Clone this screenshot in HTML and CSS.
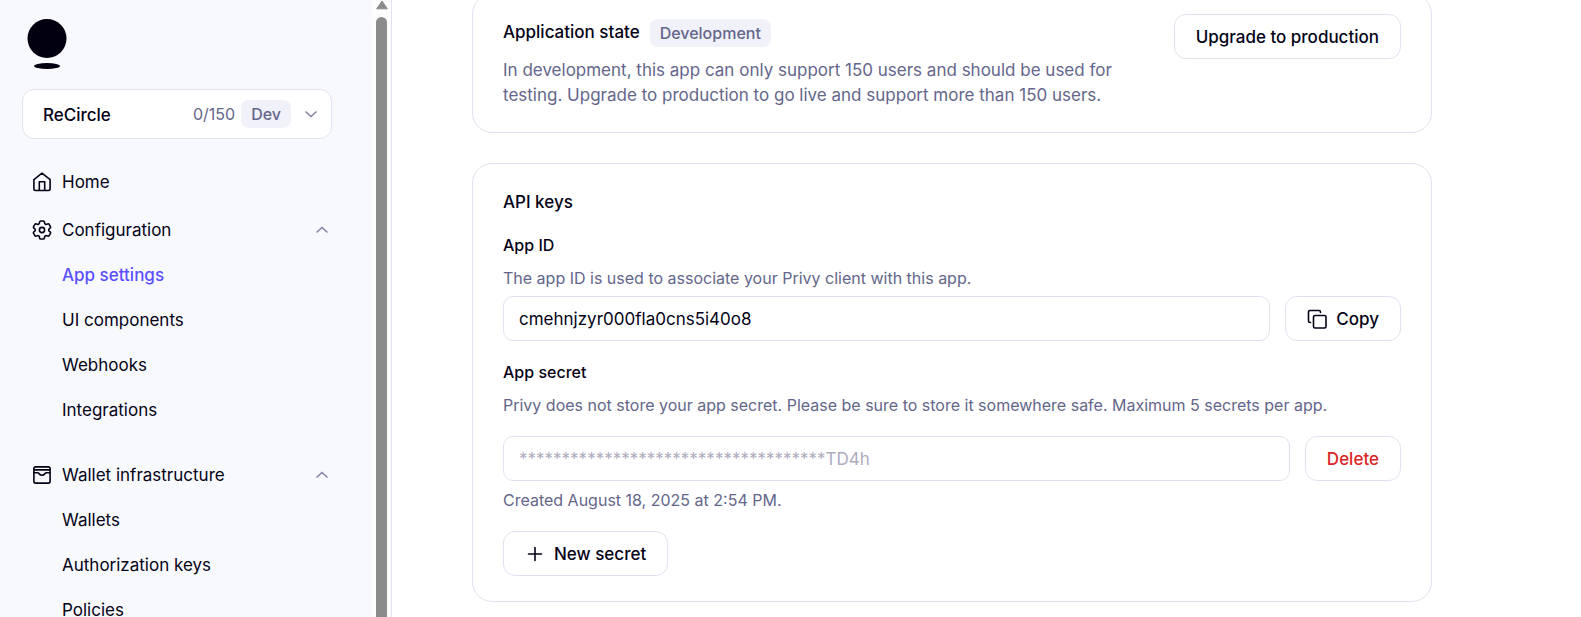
FILE: index.html
```html
<!DOCTYPE html>
<html lang="en">
<head>
<meta charset="utf-8">
<meta name="viewport" content="width=device-width, initial-scale=1">
<title>App settings</title>
<link rel="stylesheet" href="styles.css">
</head>
<body>
<div class="app">
  <aside class="sidebar">
    <div class="sidebar-body">
      <svg class="logo" viewBox="0 0 40 52" role="img" aria-label="Privy">
        <circle cx="20" cy="19.500" r="19.500"/>
        <ellipse cx="20" cy="47" rx="13" ry="3"/>
      </svg>
      <button class="switcher" type="button">
        <span class="switcher-name">ReCircle</span>
        <span class="switcher-count">0/150</span>
        <span class="badge">Dev</span>
        <svg class="chevron" viewBox="0 0 14 14" aria-hidden="true"><path d="M1.500 4.500 7 9.500l5.500-5"/></svg>
      </button>
      <nav class="nav">
        <a class="nav-top" href="#">
          <svg class="icon" viewBox="0 0 20 20" aria-hidden="true"><path d="M1.900 7.600 10 1.200l8.100 6.400v9.200a1.700 1.700 0 0 1-1.700 1.700H3.600a1.700 1.700 0 0 1-1.700-1.700zM7.300 18.300V9.700h5.400v8.600"/></svg>
          <span>Home</span>
        </a>
        <section class="group">
          <button class="nav-top" type="button">
            <svg class="icon" viewBox="2 2 20 20" aria-hidden="true"><path d="M9.594 3.940c.090-.542.560-.940 1.110-.940h2.593c.550 0 1.020.398 1.110.940l.213 1.281c.063.374.313.686.645.870.074.040.147.083.220.127.325.196.720.257 1.075.124l1.217-.456a1.125 1.125 0 0 1 1.370.490l1.296 2.247a1.125 1.125 0 0 1-.260 1.431l-1.003.827c-.293.241-.438.613-.430.992a7.723 7.723 0 0 1 0 .255c-.008.378.137.750.430.991l1.004.827c.424.350.534.955.260 1.430l-1.298 2.247a1.125 1.125 0 0 1-1.369.491l-1.217-.456c-.355-.133-.750-.072-1.076.124a6.470 6.470 0 0 1-.220.128c-.331.183-.581.495-.644.869l-.213 1.281c-.090.543-.560.940-1.110.940h-2.594c-.550 0-1.019-.398-1.110-.940l-.213-1.281c-.062-.374-.312-.686-.644-.870a6.520 6.520 0 0 1-.220-.127c-.325-.196-.720-.257-1.076-.124l-1.217.456a1.125 1.125 0 0 1-1.369-.490l-1.297-2.247a1.125 1.125 0 0 1 .260-1.431l1.004-.827c.292-.240.437-.613.430-.991a6.932 6.932 0 0 1 0-.255c.007-.380-.138-.751-.430-.992l-1.004-.827a1.125 1.125 0 0 1-.260-1.430l1.297-2.247a1.125 1.125 0 0 1 1.370-.491l1.216.456c.356.133.751.072 1.076-.124.072-.044.146-.086.220-.128.332-.183.582-.495.644-.869z"/><circle cx="12" cy="12" r="2.600"/></svg>
            <span>Configuration</span>
            <svg class="chevron" viewBox="0 0 14 14" aria-hidden="true"><path d="M1.500 9.500 7 4.500l5.500 5"/></svg>
          </button>
          <a class="nav-sub nav-sub-active" href="#">App settings</a>
          <a class="nav-sub" href="#">UI components</a>
          <a class="nav-sub" href="#">Webhooks</a>
          <a class="nav-sub" href="#">Integrations</a>
        </section>
        <section class="group">
          <button class="nav-top" type="button">
            <svg class="icon" viewBox="0 0 20 20" aria-hidden="true"><rect x="1.900" y="1.900" width="16.200" height="16.200" rx="1.800"/><path d="M2 4.900h16M2 7.700h3.400c.9 0 1.400.5 1.800 1.100.6.900 1.500 1.500 2.800 1.500s2.200-.6 2.800-1.500c.4-.6.9-1.100 1.800-1.100H18"/></svg>
            <span>Wallet infrastructure</span>
            <svg class="chevron" viewBox="0 0 14 14" aria-hidden="true"><path d="M1.500 9.500 7 4.500l5.500 5"/></svg>
          </button>
          <a class="nav-sub" href="#">Wallets</a>
          <a class="nav-sub" href="#">Authorization keys</a>
          <a class="nav-sub" href="#">Policies</a>
        </section>
      </nav>
    </div>
    <div class="scrollbar" aria-hidden="true">
      <svg class="scroll-up" viewBox="0 0 12 10"><path d="M6 1 11.300 8.800H.700z"/></svg>
      <div class="scroll-thumb"></div>
    </div>
  </aside>
  <main class="main">
    <section class="card card-state">
      <div class="state-text">
        <div class="state-title"><h2 class="title">Application state</h2><span class="badge">Development</span></div>
        <p class="lead">In development, this app can only support 150 users and should be used for testing. Upgrade to production to go live and support more than 150 users.</p>
      </div>
      <button class="btn" type="button">Upgrade to production</button>
    </section>
    <section class="card">
      <h2 class="title">API keys</h2>
      <div class="field">
        <label class="label" for="app-id">App ID</label>
        <p class="hint">The app ID is used to associate your Privy client with this app.</p>
        <div class="row">
          <input class="input" id="app-id" type="text" value="cmehnjzyr000fla0cns5i40o8" readonly>
          <button class="btn" type="button">
            <svg class="icon" viewBox="0 0 20 20" aria-hidden="true"><rect x="6.500" y="6.500" width="12.500" height="12.500" rx="1.500"/><path d="M3.500 13.500h-.500A1.500 1.500 0 0 1 1.500 12V3A1.500 1.500 0 0 1 3 1.500h9A1.500 1.500 0 0 1 13.500 3v.500"/></svg>
            Copy
          </button>
        </div>
      </div>
      <div class="field">
        <label class="label" for="app-secret">App secret</label>
        <p class="hint">Privy does not store your app secret. Please be sure to store it somewhere safe. Maximum 5 secrets per app.</p>
        <div class="row row-secret">
          <input class="input" id="app-secret" type="text" value="************************************TD4h" disabled>
          <button class="btn btn-danger" type="button">Delete</button>
        </div>
        <p class="hint hint-created">Created August 18, 2025 at 2:54 PM.</p>
      </div>
      <button class="btn btn-new" type="button">
        <svg class="icon" viewBox="0 0 20 20" aria-hidden="true"><path d="M10 3.500v13M3.500 10h13"/></svg>
        New secret
      </button>
    </section>
  </main>
</div>
</body>
</html>
```
FILE: styles.css
```css
:root {
  --ink: #040217;
  --muted: #64668b;
  --line: #e2e1f0;
  --accent: #5b4fff;
}
* { box-sizing: border-box; }
body {
  margin: 0;
  font-family: Inter, "Liberation Sans", sans-serif;
  font-size: 17px;
  line-height: 25px;
  color: var(--ink);
  background: #fff;
}
h2, p { margin: 0; }
button, input { font: inherit; color: inherit; }
button { cursor: pointer; }
a { color: inherit; text-decoration: none; }

.app {
  display: grid;
  grid-template-columns: 392px 1fr;
  height: 100vh;
  overflow: hidden;
}
.sidebar {
  display: flex;
  min-height: 0;
  border-right: 1px solid var(--line);
  background: #fcfcfd;
}
.sidebar-body {
  flex: 1;
  padding: 19px 40px 0 22px;
  overflow: hidden;
  background: #f8f9fd;
}
.scrollbar {
  display: flex;
  flex-direction: column;
  align-items: center;
  gap: 7px;
  width: 19px;
}
.scroll-up { width: 12px; height: 10px; fill: #8b8b8b; stroke: #8b8b8b; stroke-width: 1; stroke-linejoin: round; }
.scroll-thumb { flex: 1; width: 11px; border-radius: 6px 6px 0 0; background: #8b8b8b; }

.logo { display: block; width: 40px; height: 52px; margin-left: 5px; fill: #02000f; }
.switcher {
  display: flex;
  align-items: center;
  width: 100%;
  height: 50px;
  margin-top: 18px;
  padding: 0 13px 0 20px;
  border: 1px solid var(--line);
  border-radius: 12px;
  background: #fff;
}
.switcher-name { padding-top: 2px; font-weight: 500; }
.switcher-count { margin: 0 6px 0 auto; font-size: 16px; color: var(--muted); }
.switcher .chevron { margin-left: 13px; }
.badge {
  padding: 2px 10px 1px;
  border-radius: 8px;
  background: #f1f1f9;
  font-size: 16px;
  font-weight: 500;
  color: var(--muted);
}
.chevron { width: 14px; height: 14px; fill: none; stroke: #8381a6; stroke-width: 1.5; }
.icon {
  width: 20px;
  height: 20px;
  fill: none;
  stroke: currentColor;
  stroke-width: 1.6;
  stroke-linecap: round;
  stroke-linejoin: round;
}
.nav { display: grid; gap: 3px; margin-top: 21px; }
.group { display: grid; }
.group + .group { margin-top: 17px; }
.nav-top {
  display: flex;
  align-items: center;
  gap: 10px;
  height: 45px;
  padding: 0 3px 0 10px;
  border: 0;
  background: none;
}
.nav-top .icon { margin-bottom: 2px; }
.nav-top .chevron { margin: 0 0 2px auto; }
.nav-sub { padding: 10px 0 10px 40px; }
.nav-sub-active { font-weight: 500; color: var(--accent); }

.main {
  min-width: 0;
  padding-left: 80px;
  overflow: hidden;
}
.card {
  max-width: 960px;
  margin-bottom: 30px;
  padding: 25px 30px;
  border: 1px solid var(--line);
  border-radius: 20px;
}
.card-state {
  display: flex;
  align-items: flex-start;
  justify-content: space-between;
  gap: 40px;
  margin-top: -6px;
  padding: 19px 30px 24px;
}
.state-title { display: flex; gap: 10px; padding-top: 5px; }
.title { padding-top: 1px; font-size: 17px; font-weight: 500; }
.lead { margin-top: 11px; color: var(--muted); }
.btn {
  display: inline-flex;
  flex: none;
  align-items: center;
  gap: 9px;
  height: 45px;
  padding: 2px 21px 0;
  border: 1px solid var(--line);
  border-radius: 12px;
  background: #fff;
  font-weight: 500;
}
.btn .icon { margin-bottom: 2px; }
.btn-danger { color: #dc2626; }
.btn-new { margin-top: 18px; }
.field { margin-top: 19px; }
.title + .field { margin-top: 18px; }
.label { display: block; font-size: 16px; font-weight: 500; }
.hint { margin-top: 8px; font-size: 16px; color: var(--muted); }
.hint-created { margin-top: 7px; }
.row { display: flex; gap: 15px; margin-top: 5px; }
.row-secret { margin-top: 18px; }
.input {
  flex: 1;
  min-width: 0;
  height: 45px;
  padding: 0 15px;
  border: 1px solid var(--line);
  border-radius: 10px;
  background: #fff;
}
.input:disabled { color: #aeacbf; }
```
